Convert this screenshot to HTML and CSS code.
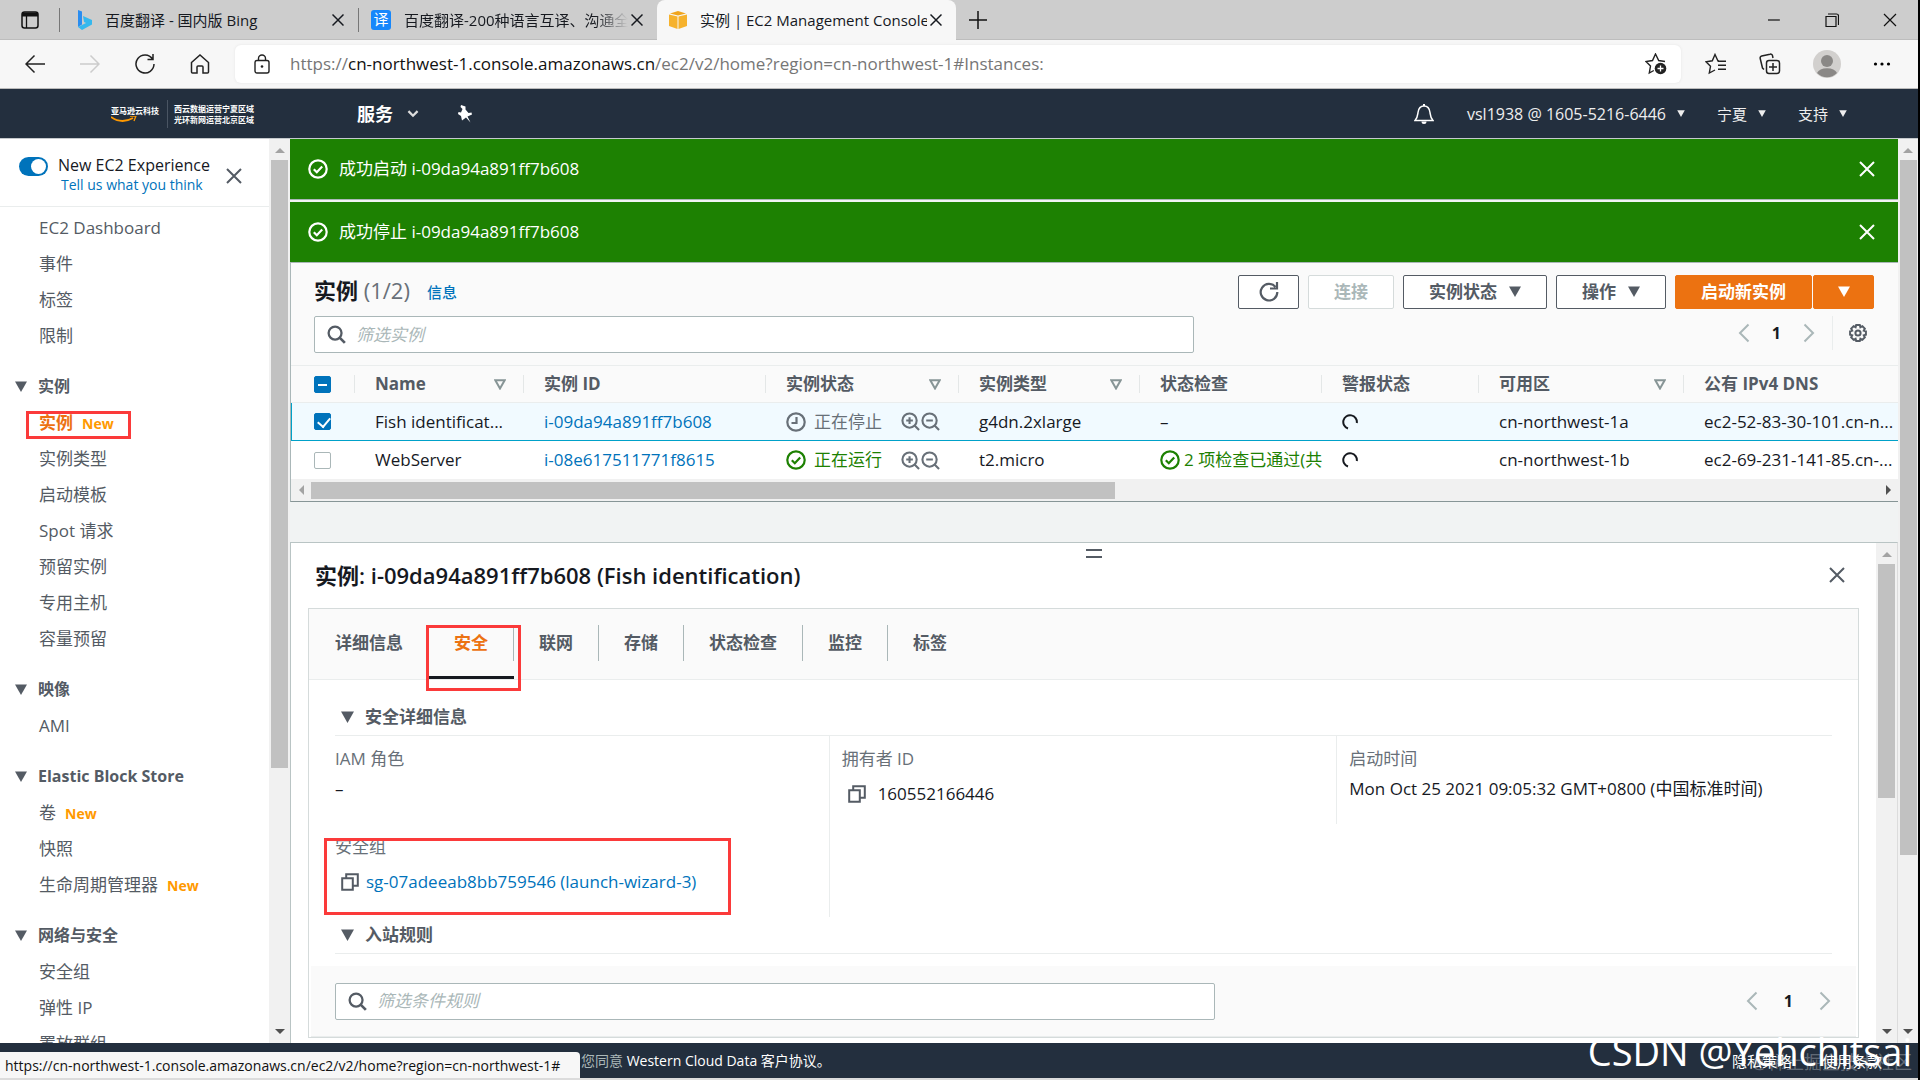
FILE: index.html
```
<!DOCTYPE html>
<html lang="zh-CN">
<head>
    <meta charset="UTF-8">
    <meta name="viewport" content="width=device-width, initial-scale=1.0">
    <title>实例 | EC2 Management Console</title>
    <link rel="stylesheet" href="styles.css">
</head>
<body>
    <!-- shared icons -->
    <svg class="sprite">
        <symbol id="i-close" viewBox="0 0 16 16"><path d="M1 1l14 14M15 1L1 15" fill="none" stroke="currentColor" stroke-width="2"/></symbol>
        <symbol id="i-x" viewBox="0 0 16 16"><path d="M2.500 2.500l11 11M13.500 2.500l-11 11" fill="none" stroke="currentColor" stroke-width="1.500"/></symbol>
        <symbol id="i-ok" viewBox="0 0 20 20"><circle cx="10" cy="10" r="8.700" fill="none" stroke="currentColor" stroke-width="2.200"/><path d="M5.800 10.200l3 3 5.400-5.800" fill="none" stroke="currentColor" stroke-width="2.200"/></symbol>
        <symbol id="i-clock" viewBox="0 0 20 20"><circle cx="10" cy="10" r="8.700" fill="none" stroke="currentColor" stroke-width="2.200"/><path d="M10.500 5v6H5.500" fill="none" stroke="currentColor" stroke-width="2.200"/></symbol>
        <symbol id="i-search" viewBox="0 0 20 20"><circle cx="8.500" cy="8.500" r="6.800" fill="none" stroke="currentColor" stroke-width="2.400"/><path d="M13.300 13.300l5.500 5.500" stroke="currentColor" stroke-width="2.800"/></symbol>
        <symbol id="i-zoomin" viewBox="0 0 20 20"><circle cx="9" cy="9" r="7.500" fill="none" stroke="currentColor" stroke-width="2.200"/><path d="M14 14l5 5M9 5.500v7M5.500 9h7" stroke="currentColor" stroke-width="2.200"/></symbol>
        <symbol id="i-zoomout" viewBox="0 0 20 20"><circle cx="9" cy="9" r="7.500" fill="none" stroke="currentColor" stroke-width="2.200"/><path d="M14 14l5 5M5.500 9h7" stroke="currentColor" stroke-width="2.200"/></symbol>
        <symbol id="i-down" viewBox="0 0 12 11"><path d="M0 0.500h12L6 11z" fill="currentColor"/></symbol>
        <symbol id="i-sort" viewBox="0 0 12 11"><path d="M1.300 1.300h9.400L6 9.500z" fill="none" stroke="currentColor" stroke-width="2"/></symbol>
        <symbol id="i-prev" viewBox="0 0 12 20"><path d="M10.500 1.500L2 10l8.500 8.500" fill="none" stroke="currentColor" stroke-width="2"/></symbol>
        <symbol id="i-next" viewBox="0 0 12 20"><path d="M1.500 1.500L10 10l-8.500 8.500" fill="none" stroke="currentColor" stroke-width="2"/></symbol>
        <symbol id="i-copy" viewBox="0 0 18 18"><path d="M1.200 5.200h10.600v11.600H1.200zM5.200 5V1.200h11.600v11.600H12" fill="none" stroke="currentColor" stroke-width="2"/></symbol>
        <symbol id="i-spin" viewBox="0 0 16 16"><path d="M6 14.500A6.800 6.800 0 1 1 14.800 9" fill="none" stroke="currentColor" stroke-width="2"/></symbol>
    </svg>

    <!-- browser tabs -->
    <div class="tabstrip">
        <button class="tab-actions" aria-label="标签页操作">
            <svg width="18" height="18" viewBox="0 0 18 18"><rect x="1" y="1" width="16" height="16" rx="2.500" fill="none" stroke="#111" stroke-width="1.500"/><path d="M1 1.500h16v4H1z" fill="#111"/><path d="M5.500 5v12" stroke="#111" stroke-width="1.300"/></svg>
        </button>
        <div class="browser-tab first">
            <svg width="14" height="20" viewBox="0 0 14 20"><path d="M0 0l4 1.500v13L0 17z" fill="#2a8df0"/><path d="M5 6l9 4v4.500L4 20l-4-3 8-4-2-1z" fill="#35b8ee"/></svg>
            <span class="tab-title">百度翻译 - 国内版 Bing</span>
            <button class="tab-close" aria-label="关闭"><svg width="12" height="16" viewBox="2 0 12 16"><use href="#i-x" width="16" height="16"/></svg></button>
        </div>
        <div class="browser-tab">
            <span class="fanyi">译</span>
            <span class="tab-title fade">百度翻译-200种语言互译、沟通全</span>
            <button class="tab-close" aria-label="关闭"><svg width="12" height="16" viewBox="2 0 12 16"><use href="#i-x" width="16" height="16"/></svg></button>
        </div>
        <div class="browser-tab active">
            <svg width="18" height="18" viewBox="0 0 18 18"><path d="M0 3.500l8.500 2V18L0 15zM18 3.500l-8.500 2V18l8.500-3z" fill="#f6b22d"/><path d="M1 2.500L9 0l8 2.500-8 2z" fill="#f0a51e"/></svg>
            <span class="tab-title">实例 | EC2 Management Console</span>
            <button class="tab-close" aria-label="关闭"><svg width="12" height="16" viewBox="2 0 12 16"><use href="#i-x" width="16" height="16"/></svg></button>
        </div>
        <button class="new-tab" aria-label="新建标签页"><svg width="18" height="18" viewBox="0 0 18 18"><path d="M9 0v18M0 9h18" stroke="#111" stroke-width="1.500"/></svg></button>
        <div class="window-buttons">
            <button aria-label="最小化"><svg width="14" height="14" viewBox="0 0 14 14"><path d="M1 7h12" stroke="#111" stroke-width="1.200"/></svg></button>
            <button aria-label="还原"><svg width="14" height="14" viewBox="0 0 14 14"><path d="M1 3.500h10v10H1zM3 1h8.500a2 2 0 0 1 2 2v9" fill="none" stroke="#111" stroke-width="1.200"/></svg></button>
            <button aria-label="关闭"><svg width="14" height="14" viewBox="0 0 14 14"><path d="M1 1l12 12M13 1L1 13" stroke="#111" stroke-width="1.200"/></svg></button>
        </div>
    </div>

    <!-- browser toolbar -->
    <div class="toolbar">
        <div class="nav-buttons">
            <button aria-label="后退"><svg width="20" height="20" viewBox="0 0 20 20"><path d="M20 10H1M9.500 1.500L1 10l8.500 8.500" fill="none" stroke="#222" stroke-width="1.500"/></svg></button>
            <button aria-label="前进" disabled><svg width="20" height="20" viewBox="0 0 20 20"><path d="M0 10h19M10.500 1.500L19 10l-8.500 8.500" fill="none" stroke="#ccc" stroke-width="1.500"/></svg></button>
            <button aria-label="刷新"><svg width="20" height="20" viewBox="0 0 20 20"><path d="M17.500 5A9 9 0 1 0 19 10M18 0v5.500h-5.500" fill="none" stroke="#222" stroke-width="1.500"/></svg></button>
            <button aria-label="主页"><svg width="20" height="20" viewBox="0 0 20 20"><path d="M1.500 8.500L10 1l8.500 7.500V18a1 1 0 0 1-1 1H13v-6a1 1 0 0 0-1-1H8a1 1 0 0 0-1 1v6H2.500a1 1 0 0 1-1-1z" fill="none" stroke="#222" stroke-width="1.500"/></svg></button>
        </div>
        <div class="address">
            <svg width="16" height="20" viewBox="0 0 16 20"><rect x="1" y="6.500" width="14" height="12.500" rx="2" fill="none" stroke="#222" stroke-width="1.400"/><path d="M4.500 6.500V4.500a3.500 3.500 0 0 1 7 0v2" fill="none" stroke="#222" stroke-width="1.400"/><circle cx="8" cy="12.500" r="1.300" fill="#222"/></svg>
            <div class="url">https://<b>cn-northwest-1.console.amazonaws.cn</b>/ec2/v2/home?region=cn-northwest-1#Instances:</div>
            <button aria-label="收藏"><svg width="22" height="22" viewBox="0 0 22 22"><path d="M20 8.500l-6.300-1L10.500 1 7.500 7.500l-6.500 1 4.500 4.500L4.300 20l4.500-2.500" fill="none" stroke="#222" stroke-width="1.400"/><circle cx="15.500" cy="15.500" r="5.800" fill="#222"/><path d="M15.500 12.500v6M12.500 15.500h6" stroke="#fff" stroke-width="1.300"/></svg></button>
        </div>
        <div class="browser-tools">
            <button aria-label="收藏夹"><svg width="22" height="22" viewBox="0 0 22 22"><path d="M14 8h-1L10 1.500 7.300 7.800 1 8.800l4.500 4.500L4.300 20 10 17" fill="none" stroke="#222" stroke-width="1.400"/><path d="M13 8.200h8M13 12.200h8M13 16.200h8" stroke="#222" stroke-width="1.400"/></svg></button>
            <button aria-label="集锦"><svg width="22" height="22" viewBox="0 0 22 22"><rect x="7.500" y="7.500" width="13" height="13" rx="2.500" fill="none" stroke="#222" stroke-width="1.500"/><path d="M14 10v8M10 14h8M5 16.500L3.500 15 1.200 5.500A2 2 0 0 1 2.700 3L11 1.200a2 2 0 0 1 2.500 1.500L14 5" fill="none" stroke="#222" stroke-width="1.500"/></svg></button>
            <button aria-label="个人资料"><svg width="28" height="28" viewBox="0 0 28 28"><circle cx="14" cy="14" r="14" fill="#d2d0ce"/><circle cx="14" cy="11" r="6" fill="#8a8886"/><path d="M4 23a10.500 7 0 0 1 20 0 14 14 0 0 1-20 0z" fill="#8a8886"/></svg></button>
            <button aria-label="设置及其他"><svg width="18" height="18" viewBox="0 0 18 18"><circle cx="2.500" cy="9" r="1.600"/><circle cx="9" cy="9" r="1.600"/><circle cx="15.500" cy="9" r="1.600"/></svg></button>
        </div>
    </div>

    <!-- console header -->
    <header class="console-nav">
        <a class="logo" href="#">
            <span class="logo-name">亚马逊云科技
                <svg width="26" height="7" viewBox="0 0 26 7"><path d="M0 1c7 5 15 5 22 1" fill="none" stroke="#f90" stroke-width="1.800"/><path d="M19 0h6l-2 5" fill="none" stroke="#f90" stroke-width="1.300"/></svg>
            </span>
            <span class="logo-region">西云数据运营宁夏区域<br>光环新网运营北京区域</span>
        </a>
        <button class="services">服务 <svg width="12" height="8" viewBox="0 0 10 7"><path d="M1 1l4 4 4-4" fill="none" stroke="#ddd" stroke-width="2"/></svg></button>
        <button class="pin" aria-label="固定"><svg width="16" height="18" viewBox="0 0 16 18"><path d="M4 0l4.500 1.500v3l3 3.500 3-.5.500 2-4.500 2 3 6-4.500-5-4 3-1-4.500L1 9l.5-2 2.500.500 1.500-3.500L3.500 2z" fill="#fff"/></svg></button>
        <div class="account">
            <button aria-label="通知"><svg width="20" height="20" viewBox="0 0 20 20"><path d="M1 16.500c2.500-2.500 2.500-4 3-8C4.500 4.500 6.500 2 10 2s5.500 2.500 6 6.500c.5 4 .5 5.500 3 8z" fill="none" stroke="#fff" stroke-width="1.500"/><path d="M7.500 17.500a2.500 2.500 0 0 0 5 0zM9 0h2v2H9z" fill="#fff"/></svg></button>
            <button class="user">vsl1938 @ 1605-5216-6446 <svg width="10" height="7"><use href="#i-down"/></svg></button>
            <button>宁夏 <svg width="10" height="7"><use href="#i-down"/></svg></button>
            <button>支持 <svg width="10" height="7"><use href="#i-down"/></svg></button>
        </div>
    </header>

    <div class="console">
        <nav class="sidebar">
            <div class="experience">
                <input type="checkbox" class="toggle" id="newExperience" checked>
                <div class="experience-text">
                    <label for="newExperience">New EC2 Experience</label>
                    <a href="#">Tell us what you think</a>
                </div>
                <button aria-label="关闭导航"><svg width="16" height="16"><use href="#i-close"/></svg></button>
            </div>
            <ul>
                <li><a href="#">EC2 Dashboard</a></li>
                <li><a href="#">事件</a></li>
                <li><a href="#">标签</a></li>
                <li><a href="#">限制</a></li>
            </ul>
            <h3><svg width="12" height="11"><use href="#i-down"/></svg>实例</h3>
            <ul>
                <li class="current"><a href="#">实例</a><span class="new">New</span><i class="mark"></i></li>
                <li><a href="#">实例类型</a></li>
                <li><a href="#">启动模板</a></li>
                <li><a href="#">Spot 请求</a></li>
                <li><a href="#">预留实例</a></li>
                <li><a href="#">专用主机</a></li>
                <li><a href="#">容量预留</a></li>
            </ul>
            <h3><svg width="12" height="11"><use href="#i-down"/></svg>映像</h3>
            <ul>
                <li><a href="#">AMI</a></li>
            </ul>
            <h3><svg width="12" height="11"><use href="#i-down"/></svg>Elastic Block Store</h3>
            <ul>
                <li><a href="#">卷</a><span class="new">New</span></li>
                <li><a href="#">快照</a></li>
                <li><a href="#">生命周期管理器</a><span class="new">New</span></li>
            </ul>
            <h3><svg width="12" height="11"><use href="#i-down"/></svg>网络与安全</h3>
            <ul>
                <li><a href="#">安全组</a></li>
                <li><a href="#">弹性 IP</a></li>
                <li><a href="#">置放群组</a></li>
            </ul>
        </nav>
        <div class="scrollbar"><i class="up"></i><div class="track"><div class="thumb" style="height: 70.5%"></div></div><i class="down"></i></div>

        <main>
            <div class="flash">
                <svg width="20" height="20"><use href="#i-ok"/></svg>
                <span>成功启动 i-09da94a891ff7b608</span>
                <button aria-label="关闭"><svg width="16" height="16"><use href="#i-close"/></svg></button>
            </div>
            <div class="flash">
                <svg width="20" height="20"><use href="#i-ok"/></svg>
                <span>成功停止 i-09da94a891ff7b608</span>
                <button aria-label="关闭"><svg width="16" height="16"><use href="#i-close"/></svg></button>
            </div>

            <section class="instances">
                <div class="list-header">
                    <h1>实例 <span>(1/2)</span></h1>
                    <a class="info" href="#">信息</a>
                    <div class="actions">
                        <button class="btn icon-only" aria-label="刷新"><svg width="20" height="20" viewBox="0 0 20 20"><path d="M16.500 5A8.300 8.300 0 1 0 18.300 10M18 0v6.500h-7" fill="none" stroke="currentColor" stroke-width="2.200"/></svg></button>
                        <button class="btn" disabled>连接</button>
                        <button class="btn">实例状态 <svg width="12" height="11"><use href="#i-down"/></svg></button>
                        <button class="btn">操作 <svg width="12" height="11"><use href="#i-down"/></svg></button>
                        <div class="split">
                            <button class="btn primary">启动新实例</button>
                            <button class="btn primary icon-only" aria-label="更多"><svg width="12" height="11"><use href="#i-down"/></svg></button>
                        </div>
                    </div>
                </div>
                <div class="filter-row">
                    <div class="search">
                        <svg width="19" height="19"><use href="#i-search"/></svg>
                        <input type="text" aria-label="筛选实例" placeholder="筛选实例">
                    </div>
                    <div class="pager">
                        <button aria-label="上一页"><svg width="12" height="20"><use href="#i-prev"/></svg></button>
                        <span>1</span>
                        <button aria-label="下一页"><svg width="12" height="20"><use href="#i-next"/></svg></button>
                    </div>
                    <button class="gear" aria-label="首选项"><svg width="20" height="20" viewBox="0 0 20 20"><path d="M8.200 1.200h3.600l.6 2.100 2-1 2.400 2.400-1 2 2.100.6v3.600l-2.100.6 1 2-2.400 2.400-2-1-.6 2.100H8.200l-.6-2.100-2 1-2.400-2.400 1-2-2.100-.6V7.300l2.100-.6-1-2 2.400-2.400 2 1z" transform="translate(0 .9)" fill="none" stroke="currentColor" stroke-width="2"/><circle cx="10" cy="10" r="2.600" fill="none" stroke="currentColor" stroke-width="2"/></svg></button>
                </div>
                <div class="table-wrap">
                    <table>
                        <colgroup><col class="c-check"><col class="c-name"><col class="c-id"><col class="c-state"><col class="c-type"><col class="c-health"><col class="c-alarm"><col class="c-zone"><col></colgroup>
                        <thead>
                            <tr>
                                <th><input type="checkbox" class="check partial" aria-label="全选" checked></th>
                                <th><div>Name<svg width="12" height="11"><use href="#i-sort"/></svg></div></th>
                                <th><div>实例 ID</div></th>
                                <th><div>实例状态<svg width="12" height="11"><use href="#i-sort"/></svg></div></th>
                                <th><div>实例类型<svg width="12" height="11"><use href="#i-sort"/></svg></div></th>
                                <th><div>状态检查</div></th>
                                <th><div>警报状态</div></th>
                                <th><div>可用区<svg width="12" height="11"><use href="#i-sort"/></svg></div></th>
                                <th><div>公有 IPv4 DNS<svg width="12" height="11"><use href="#i-sort"/></svg></div></th>
                            </tr>
                        </thead>
                        <tbody>
                            <tr class="selected">
                                <td><input type="checkbox" class="check" aria-label="Fish identification" checked></td>
                                <td>Fish identificat...</td>
                                <td><a href="#">i-09da94a891ff7b608</a></td>
                                <td><div class="state pending"><svg width="20" height="20"><use href="#i-clock"/></svg>正在停止<span class="lens"><svg width="19" height="19"><use href="#i-zoomin"/></svg><svg width="19" height="19"><use href="#i-zoomout"/></svg></span></div></td>
                                <td>g4dn.2xlarge</td>
                                <td>–</td>
                                <td><svg class="spin" width="16" height="16"><use href="#i-spin"/></svg></td>
                                <td>cn-northwest-1a</td>
                                <td>ec2-52-83-30-101.cn-n...</td>
                            </tr>
                            <tr>
                                <td><input type="checkbox" class="check" aria-label="WebServer"></td>
                                <td>WebServer</td>
                                <td><a href="#">i-08e617511771f8615</a></td>
                                <td><div class="state ok"><svg width="20" height="20"><use href="#i-ok"/></svg>正在运行<span class="lens"><svg width="19" height="19"><use href="#i-zoomin"/></svg><svg width="19" height="19"><use href="#i-zoomout"/></svg></span></div></td>
                                <td>t2.micro</td>
                                <td><div class="state health ok"><svg width="20" height="20"><use href="#i-ok"/></svg>2 项检查已通过(共</div></td>
                                <td><svg class="spin" width="16" height="16"><use href="#i-spin"/></svg></td>
                                <td>cn-northwest-1b</td>
                                <td>ec2-69-231-141-85.cn-...</td>
                            </tr>
                        </tbody>
                    </table>
                </div>
                <div class="scrollbar horizontal"><i class="left"></i><div class="track"><div class="thumb" style="width: 51.3%"></div></div><i class="right"></i></div>
            </section>

            <section class="split-panel">
                <div class="panel-content">
                    <div class="handle"></div>
                    <div class="panel-title">
                        <h2>实例: i-09da94a891ff7b608 (Fish identification)</h2>
                        <button aria-label="关闭面板"><svg width="16" height="16"><use href="#i-close"/></svg></button>
                    </div>
                    <div class="detail-box">
                        <div class="tabs" role="tablist">
                            <button role="tab"><span>详细信息</span></button>
                            <button role="tab" class="active" aria-selected="true"><span>安全</span><i class="mark"></i></button>
                            <button role="tab"><span>联网</span></button>
                            <button role="tab"><span>存储</span></button>
                            <button role="tab"><span>状态检查</span></button>
                            <button role="tab"><span>监控</span></button>
                            <button role="tab"><span>标签</span></button>
                        </div>
                        <div class="tab-body">
                            <h3><svg width="13" height="12"><use href="#i-down"/></svg>安全详细信息</h3>
                            <dl class="facts">
                                <div><dt>IAM 角色</dt><dd>–</dd></div>
                                <div><dt>拥有者 ID</dt><dd class="copy"><svg width="18" height="18"><use href="#i-copy"/></svg><span>160552166446</span></dd></div>
                                <div><dt>启动时间</dt><dd>Mon Oct 25 2021 09:05:32 GMT+0800 (中国标准时间)</dd></div>
                                <div class="groups"><dt>安全组</dt><dd class="copy"><svg width="18" height="18"><use href="#i-copy"/></svg><a href="#">sg-07adeeab8bb759546 (launch-wizard-3)</a></dd><i class="mark"></i></div>
                                <div class="empty"></div>
                            </dl>
                            <h3><svg width="13" height="12"><use href="#i-down"/></svg>入站规则</h3>
                        </div>
                        <div class="rules">
                            <div class="search">
                                <svg width="19" height="19"><use href="#i-search"/></svg>
                                <input type="text" aria-label="筛选条件规则" placeholder="筛选条件规则">
                            </div>
                            <div class="pager">
                                <button aria-label="上一页"><svg width="12" height="20"><use href="#i-prev"/></svg></button>
                                <span>1</span>
                                <button aria-label="下一页"><svg width="12" height="20"><use href="#i-next"/></svg></button>
                            </div>
                        </div>
                    </div>
                </div>
                <div class="scrollbar"><i class="up"></i><div class="track"><div class="thumb" style="height: 51%"></div></div><i class="down"></i></div>
            </section>
        </main>
        <div class="scrollbar page"><i class="up"></i><div class="track"><div class="thumb" style="height: 80.6%"></div></div><i class="down"></i></div>
    </div>

    <footer>
        <p><span>您同意</span> Western Cloud Data 客户协议。</p>
        <div class="footer-links"><a href="#">隐私策略</a><a href="#">使用条款</a></div>
        <div class="status-url">https://cn-northwest-1.console.amazonaws.cn/ec2/v2/home?region=cn-northwest-1#</div>
        <div class="community">@稀土掘金技术社区</div>
        <div class="watermark">CSDN @Yehchitsai</div>
    </footer>
</body>
</html>
```

FILE: styles.css
```
* {
    box-sizing: border-box;
}

body {
    margin: 0;
    height: 100vh;
    display: flex;
    flex-direction: column;
    overflow: hidden;
    border-right: 2px solid #000;
    font-family: 'Open Sans', 'Noto Sans CJK SC', sans-serif;
    font-size: 17px;
    line-height: 24px;
    color: #16191f;
    background: #fff;
}

button {
    display: flex;
    align-items: center;
    padding: 0;
    border: none;
    background: none;
    font: inherit;
    color: inherit;
    cursor: pointer;
}

svg {
    flex: none;
}

a {
    color: #0073bb;
    text-decoration: none;
}

h1, h2, h3, p, ul, dl, dd {
    margin: 0;
    padding: 0;
}

.sprite {
    display: none;
}

/* hand-drawn red frames */
.mark {
    position: absolute;
    border: 3px solid #fb3a3a;
    pointer-events: none;
}

/* browser tabs */
.tabstrip {
    display: flex;
    align-items: center;
    height: 40px;
    flex: none;
    background: #cdcdcd;
    border-bottom: 1px solid #bdbdbd;
    font-size: 15px;
}

.tab-actions {
    width: 59px;
    justify-content: center;
}

.browser-tab {
    display: flex;
    align-items: center;
    width: 299px;
    height: 24px;
    padding: 0 14px 0 12px;
    gap: 13px;
    border-left: 1px solid #777;
}

.browser-tab.first {
    padding-left: 18px;
}

.browser-tab.active {
    height: 40px;
    margin-bottom: -1px;
    border: none;
    border-radius: 8px 8px 0 0;
    background: #f7f7f7;
}

.tab-title {
    flex: 1;
    overflow: hidden;
    white-space: nowrap;
}

.tab-title.fade {
    mask-image: linear-gradient(to right, #000 85%, transparent);
}

.tab-close {
    margin-left: -10px;
}

.fanyi {
    width: 20px;
    height: 20px;
    border-radius: 3px;
    background: #1687fb;
    color: #fff;
    line-height: 19px;
    text-align: center;
}

.new-tab {
    margin-left: 13px;
}

.window-buttons {
    display: flex;
    gap: 44px;
    margin-left: auto;
    padding-right: 21px;
}

/* browser toolbar */
.toolbar {
    display: flex;
    align-items: center;
    height: 49px;
    flex: none;
    background: #f7f7f7;
    border-bottom: 1px solid #bbb;
}

.nav-buttons {
    display: flex;
    gap: 35px;
    padding: 0 25px;
}

.address {
    flex: 1;
    display: flex;
    align-items: center;
    height: 38px;
    padding: 0 14px 0 19px;
    border-radius: 6px;
    background: #fff;
    box-shadow: 0 0 3px #e4e4e4;
}

.url {
    flex: 1;
    padding-left: 20px;
    color: #767676;
}

.url b {
    font-weight: normal;
    color: #111;
}

.browser-tools {
    display: flex;
    align-items: center;
    gap: 32px;
    padding: 0 27px 0 24px;
}

/* console header */
.console-nav {
    display: flex;
    align-items: center;
    height: 50px;
    flex: none;
    background: #232f3e;
    border-bottom: 1px solid #c5c9cc;
    color: #fff;
    font-size: 16px;
}

.logo {
    display: flex;
    align-items: center;
    width: 357px;
    padding-left: 111px;
    color: #fff;
    font-size: 8px;
    font-weight: bold;
    line-height: 11px;
}

.logo-name {
    display: flex;
    flex-direction: column;
    width: 56px;
}

.logo-region {
    padding: 3px 0 3px 6px;
    border-left: 1px solid #4a5563;
}

.services {
    gap: 14px;
    font-size: 18px;
    font-weight: bold;
}

.pin {
    margin-left: 38px;
}

.account {
    display: flex;
    margin-left: auto;
    gap: 33px;
    padding-right: 70px;
    font-size: 15px;
}

.account button {
    gap: 10px;
    color: #eee;
}

.account .user {
    font-size: 16px;
}

.account button + button:not(.user) {
    margin-left: -2px;
}

/* scrollbars */
.scrollbar {
    display: flex;
    flex-direction: column;
    align-items: center;
    width: 21px;
    flex: none;
    background: #f1f1f1;
}

.scrollbar .track {
    flex: 1;
    width: 17px;
}

.scrollbar .thumb {
    background: #c1c1c1;
}

.scrollbar .up,
.scrollbar .down {
    margin: 9px 0 7px;
    border: 5px solid transparent;
    border-top-width: 0;
    border-bottom: 5px solid #a3a3a3;
}

.scrollbar .down {
    margin: 7px 0 9px;
    border-top: 5px solid #505050;
    border-bottom-width: 0;
}

.scrollbar.horizontal {
    flex-direction: row;
    width: auto;
    height: 22px;
}

.scrollbar.horizontal .track {
    height: 17px;
    width: auto;
}

.scrollbar.horizontal .thumb {
    height: 17px;
}

.scrollbar .left,
.scrollbar .right {
    margin: 0 7px 0 8px;
    border: 5px solid transparent;
    border-left-width: 0;
    border-right: 5px solid #a3a3a3;
}

.scrollbar .right {
    border-left: 5px solid #505050;
    border-right-width: 0;
}

.scrollbar.page {
    width: 20px;
}

.console {
    flex: 1;
    display: flex;
    min-height: 0;
}

/* sidebar */
.sidebar {
    width: 269px;
    flex: none;
    overflow: hidden;
    color: #545b64;
}

.experience {
    display: flex;
    align-items: flex-start;
    height: 68px;
    padding: 16px 0 0 19px;
    border-bottom: 1px solid #eaeded;
}

.toggle {
    appearance: none;
    width: 29px;
    height: 19px;
    margin: 2px 10px 0 0;
    border-radius: 10px;
    background: #0073bb;
}

.toggle::after {
    content: '';
    display: block;
    width: 15px;
    height: 15px;
    margin: 2px 0 0 12px;
    border-radius: 8px;
    background: #fff;
}

.experience-text {
    display: flex;
    flex-direction: column;
    width: 168px;
    line-height: 20px;
    color: #16191f;
    font-size: 16px;
    white-space: nowrap;
}

.experience-text a {
    padding-left: 3px;
    font-size: 14px;
}

.experience button {
    margin-top: 13px;
}

.sidebar ul {
    list-style: none;
    line-height: 36px;
}

.sidebar > ul:first-of-type {
    margin-top: 3px;
}

.sidebar li {
    position: relative;
    height: 36px;
    padding-left: 39px;
}

.sidebar li a {
    color: #545b64;
}

.sidebar li.current a {
    color: #ec7211;
    font-weight: bold;
}

.new {
    margin-left: 9px;
    color: #ff9900;
    font-size: 14px;
    font-weight: bold;
}

.sidebar .mark {
    left: 26px;
    top: 6px;
    width: 105px;
    height: 28px;
}

.sidebar h3 {
    display: flex;
    align-items: center;
    gap: 11px;
    height: 38px;
    margin-top: 13px;
    padding-left: 15px;
    font-size: 16px;
}

/* main column */
main {
    flex: 1;
    min-width: 0;
    display: flex;
    flex-direction: column;
    background: #f1f3f3;
}

.flash {
    display: flex;
    align-items: center;
    height: 60px;
    flex: none;
    padding: 0 23px 0 18px;
    gap: 11px;
    background: #1d8102;
    color: #fff;
}

.flash + .flash {
    margin-top: 3px;
}

.flash:first-child {
    box-shadow: 0 1px 0 #aab7b8;
}

.flash button {
    margin-left: auto;
}

.instances {
    flex: none;
    background: #fafafa;
    border: 1px solid #aab7b8;
    border-width: 1px 0 1px 1px;
    border-bottom-color: #879596;
}

.list-header {
    display: flex;
    align-items: center;
    height: 53px;
    padding: 4px 24px 0 23px;
}

h1 {
    margin-bottom: 4px;
    font-size: 22px;
}

h1 span {
    color: #687078;
    font-weight: normal;
}

.info {
    margin: 1px 0 0 17px;
    font-size: 15px;
    font-weight: 500;
}

.actions {
    display: flex;
    gap: 9px;
    margin-left: auto;
}

.btn {
    justify-content: center;
    gap: 12px;
    height: 34px;
    padding: 0 25px;
    border: 1px solid #545b64;
    border-radius: 2px;
    background: #fff;
    color: #545b64;
    font-weight: bold;
}

.btn:disabled {
    border-color: #d5dbdb;
    color: #aab7b8;
}

.btn.icon-only {
    width: 61px;
    padding: 0;
}

.btn.primary {
    border-color: #ec7211;
    background: #ec7211;
    color: #fff;
}

.split {
    display: flex;
    gap: 1px;
}

.filter-row {
    display: flex;
    align-items: flex-start;
    height: 49px;
    padding: 0 30px 0 23px;
}

.search {
    display: flex;
    align-items: center;
    flex: 0 1 880px;
    height: 37px;
    padding: 0 12px;
    gap: 10px;
    border: 1px solid #aab7b8;
    border-radius: 2px;
    background: #fff;
    color: #545b64;
}

.search input {
    flex: 1;
    border: none;
    outline: none;
    padding: 0;
    font: inherit;
}

.search input::placeholder {
    color: #aab7b8;
    font-style: italic;
}

.filter-row .search {
    margin-right: auto;
}

.pager {
    display: flex;
    align-items: center;
    gap: 22px;
    height: 34px;
    color: #aab7b8;
}

.pager span {
    color: #16191f;
    font-size: 16px;
    font-weight: bold;
}

.gear {
    height: 34px;
    margin-left: 17px;
    padding-left: 15px;
    border-left: 1px solid #eaeded;
    color: #545b64;
}

.table-wrap {
    overflow: hidden;
    border-top: 1px solid #eaeded;
}

table {
    width: 1640px;
    table-layout: fixed;
    border-collapse: separate;
    border-spacing: 0;
}

.c-check { width: 63px; }
.c-name { width: 169px; }
.c-id { width: 242px; }
.c-state { width: 193px; }
.c-type { width: 181px; }
.c-health { width: 182px; }
.c-alarm { width: 157px; }
.c-zone { width: 205px; }

th {
    height: 37px;
    padding: 0;
    border-bottom: 1px solid #eaeded;
    color: #545b64;
    text-align: left;
}

th div {
    display: flex;
    align-items: center;
    justify-content: space-between;
    height: 18px;
    padding: 0 17px 0 20px;
    border-left: 1px solid #e4e7e7;
}

th svg {
    color: #879596;
}

td {
    height: 38px;
    padding: 0 0 0 21px;
    background: #fff;
    white-space: nowrap;
}

th:first-child,
td:first-child {
    padding-left: 23px;
}

.selected td {
    background: #f1faff;
    border-bottom: 1px solid #00a1c9;
}

.selected td:first-child {
    box-shadow: inset 1px 0 0 #00a1c9;
}

.check {
    appearance: none;
    display: block;
    width: 17px;
    height: 17px;
    margin: 0;
    border: 1px solid #aab7b8;
    border-radius: 2px;
    background: #fff;
}

.check:checked {
    border-color: #0073bb;
    background: #0073bb;
}

.check:checked::after {
    content: '';
    display: block;
    width: 6px;
    height: 10px;
    margin: 1px 0 0 5px;
    border: solid #fff;
    border-width: 0 2px 2px 0;
    transform: rotate(40deg);
}

.check.partial:checked::after {
    width: 9px;
    height: 2px;
    margin: 7px 0 0 3px;
    border: none;
    background: #fff;
    transform: none;
}

.state {
    display: flex;
    align-items: center;
    gap: 8px;
}

.state.health {
    gap: 4px;
}

.state.pending {
    color: #687078;
}

.state.ok {
    color: #1d8102;
}

.lens {
    display: flex;
    gap: 1px;
    margin-left: 11px;
    color: #687078;
}

.spin {
    display: block;
}

/* bottom panel */
.split-panel {
    flex: 1;
    display: flex;
    min-height: 0;
    margin-top: 40px;
    border: 1px solid #b9c4c4;
    border-bottom: none;
    border-right-color: #dcdcdc;
    background: #fff;
}

.panel-content {
    position: relative;
    flex: 1;
    overflow: hidden;
    padding: 0 17px;
}

.handle {
    position: absolute;
    top: 6px;
    left: 50%;
    margin-left: 2px;
    width: 16px;
    height: 9px;
    border: solid #545b64;
    border-width: 2px 0;
}

.panel-title {
    display: flex;
    align-items: center;
    justify-content: space-between;
    height: 65px;
    padding: 0 14px 2px 7px;
    color: #545b64;
}

h2 {
    color: #16191f;
    font-size: 22px;
    font-weight: 600;
}

.detail-box {
    border: 1px solid #d5dbdb;
}

.tabs {
    display: flex;
    height: 71px;
    padding-left: 1px;
    background: #fafafa;
    border-bottom: 1px solid #eaeded;
    color: #545b64;
    font-weight: bold;
}

.tabs button {
    position: relative;
    border-bottom: 3px solid transparent;
}

.tabs span {
    padding: 6px 25px;
    border-right: 1px solid #aab7b8;
}

.tabs button:first-child span,
.tabs button:last-child span {
    border-color: transparent;
}

.tabs .active {
    color: #ec7211;
    border-bottom-color: #16191f;
}

.tabs .mark {
    left: -3px;
    top: 16px;
    width: 95px;
    height: 66px;
}

.tab-body {
    padding: 19px 26px 12px;
}

.tab-body h3 {
    display: flex;
    align-items: center;
    gap: 11px;
    height: 37px;
    padding-left: 6px;
    border-bottom: 1px solid #eaeded;
    color: #545b64;
    font-size: 17px;
}

.facts {
    display: grid;
    grid-template-columns: 493fr 507fr 508fr;
    grid-template-rows: 88px 93px;
    margin-right: -13px;
}

.facts > div {
    position: relative;
    padding: 11px 0 0 12px;
    border-left: 1px solid #eaeded;
}

.facts > div:nth-child(3n + 1) {
    padding-left: 0;
    border: none;
}

dt {
    color: #687078;
}

dd {
    margin-top: 6px;
    white-space: nowrap;
}

.copy {
    display: flex;
    align-items: center;
    gap: 12px;
    margin-top: 11px;
    padding-left: 6px;
}

.copy svg {
    color: #545b64;
}

.groups .copy {
    gap: 7px;
}

.groups .mark {
    left: -11px;
    top: 14px;
    width: 407px;
    height: 77px;
}

.rules {
    display: flex;
    align-items: center;
    justify-content: space-between;
    height: 71px;
    margin: 0 2px;
    padding: 0 25px 0 24px;
    background: #fafafa;
    border-bottom: 1px solid #eaeded;
}

.rules .pager {
    gap: 26px;
}

/* footer */
footer {
    position: relative;
    display: flex;
    align-items: center;
    height: 37px;
    flex: none;
    padding: 0 36px 0 581px;
    background: #232f3e;
    border-bottom: 2px solid #dcdcdc;
    color: #fff;
    font-size: 14px;
}

footer p span {
    color: #aab7b8;
}

.footer-links {
    display: flex;
    gap: 30px;
    margin-left: auto;
}

.footer-links a {
    color: #fff;
    font-size: 15px;
}

.status-url {
    position: absolute;
    left: 0;
    bottom: 0;
    height: 26px;
    padding: 0 20px 0 5px;
    border-radius: 0 4px 0 0;
    background: #f7f7f7;
    color: #111;
    font-size: 14px;
    line-height: 27px;
}

.community,
.watermark {
    position: absolute;
    right: 6px;
    white-space: nowrap;
}

.community {
    bottom: 4px;
    color: rgba(255, 255, 255, 0.3);
    font-size: 18px;
}

.watermark {
    bottom: 4px;
    font-size: 38px;
    line-height: 46px;
}
```
